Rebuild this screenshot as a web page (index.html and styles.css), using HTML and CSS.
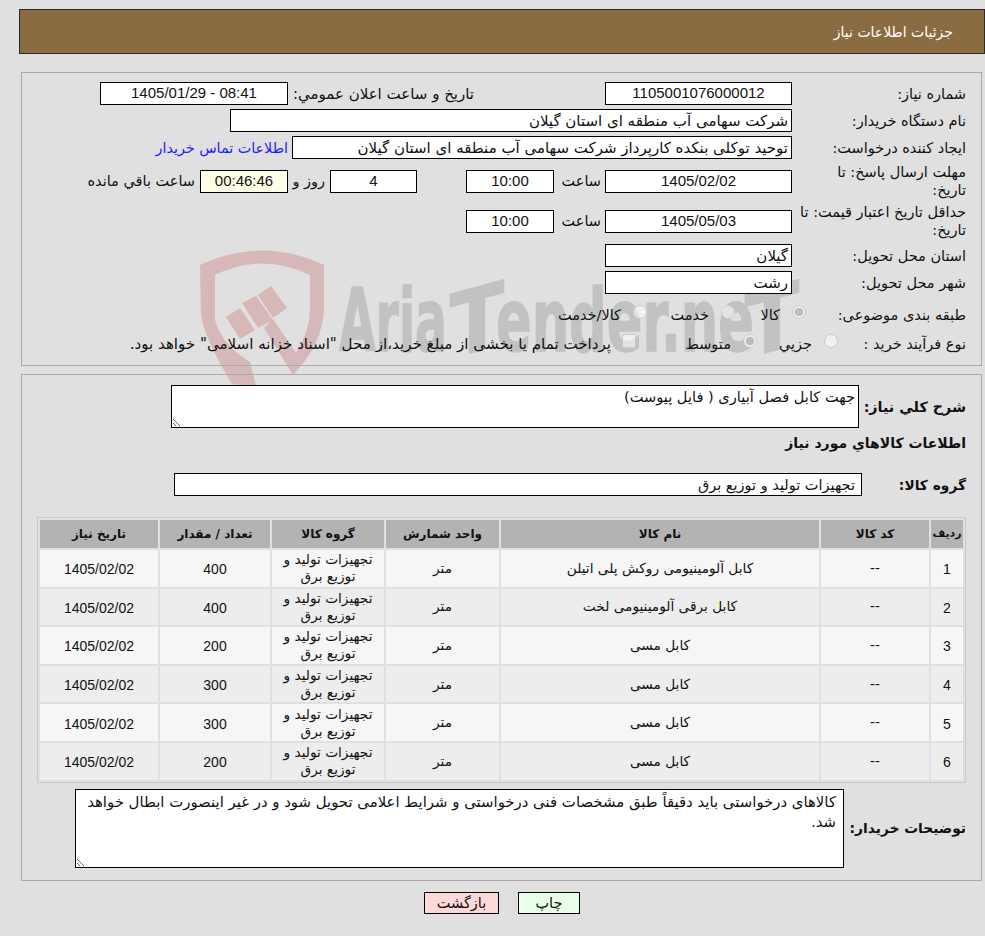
FILE: index.html
```html
<!DOCTYPE html>
<html lang="fa" dir="rtl">
<head>
<meta charset="utf-8">
<title>جزئیات اطلاعات نیاز</title>
<link rel="stylesheet" href="styles.css">
</head>
<body>
<svg class="watermark" width="985" height="420" viewBox="0 0 985 420" aria-hidden="true">
  <path class="wm-red" fill-rule="evenodd" d="M200,265 Q262,236 324,265 L324,310 Q322,345 293,375 L264,328 L273,319 L296,353 Q310,330 310,310 L310,275 Q262,252 215,275 L215,320 Q222,345 250,362 L256,386 L232,384 Q205,340 201,315 Z"/>
  <polygon class="wm-red" points="226,317 240,308 255,330 240,339"/>
  <polygon class="wm-red" points="242,303 256,296 273,320 258,328"/>
  <polygon class="wm-red" points="258,295 271,286 287,308 273,318"/>
  <text class="wm-text" x="339" y="351" textLength="108" lengthAdjust="spacingAndGlyphs">Aria</text>
  <text class="wm-text" x="450" y="351" textLength="54" lengthAdjust="spacingAndGlyphs" transform="translate(0 128) skewY(-15)">T</text>
  <text class="wm-text" x="496" y="351" textLength="258" lengthAdjust="spacingAndGlyphs">ender.ne</text>
  <text class="wm-text" x="745" y="351" textLength="54" lengthAdjust="spacingAndGlyphs" transform="translate(0 207) skewY(-15)">T</text>
</svg>
<div class="page">
  <header class="title-bar">جزئیات اطلاعات نیاز</header>

  <section class="panel panel-top">
    <div class="row">
      <div class="lbl">شماره نیاز:</div>
      <div class="box num w187">1105001076000012</div>
      <div class="lbl-auto ms131 w181">تاریخ و ساعت اعلان عمومي:</div>
      <div class="box num w188 ms5" dir="ltr">1405/01/29 - 08:41</div>
    </div>
    <div class="row">
      <div class="lbl">نام دستگاه خریدار:</div>
      <div class="box text w562">شرکت سهامی آب منطقه ای استان گیلان</div>
    </div>
    <div class="row">
      <div class="lbl">ایجاد کننده درخواست:</div>
      <div class="box text w500">توحید توکلی بنکده کارپرداز شرکت سهامی آب منطقه ای استان گیلان</div>
      <a class="contact" href="#">اطلاعات تماس خریدار</a>
    </div>
    <div class="row tall">
      <div class="lbl">مهلت ارسال پاسخ: تا<br>تاریخ:</div>
      <div class="box num w187">1405/02/02</div>
      <div class="saat">ساعت</div>
      <div class="box num w88">10:00</div>
      <div class="box num w87 ms49">4</div>
      <div class="lbl-auto days">روز و</div>
      <div class="box num w88 timer">00:46:46</div>
      <div class="lbl-auto ms5">ساعت باقي مانده</div>
    </div>
    <div class="row tall">
      <div class="lbl">حداقل تاریخ اعتبار قیمت: تا تاریخ:</div>
      <div class="box num w187">1405/05/03</div>
      <div class="saat">ساعت</div>
      <div class="box num w88">10:00</div>
    </div>
    <div class="row">
      <div class="lbl">استان محل تحویل:</div>
      <div class="box text w187">گیلان</div>
    </div>
    <div class="row">
      <div class="lbl">شهر محل تحویل:</div>
      <div class="box text w187">رشت</div>
    </div>
    <div class="row choice first-choice">
      <div class="lbl-choice w160">طبقه بندی موضوعی:</div>
      <label class="opt w71"><input type="radio" name="c" class="mark" checked disabled><span>کالا</span></label>
      <label class="opt w88b"><input type="radio" name="c" class="mark" disabled><span>خدمت</span></label>
      <label class="opt"><input type="radio" name="c" class="mark" disabled><span>کالا/خدمت</span></label>
    </div>
    <div class="row choice">
      <div class="lbl-choice w128">نوع فرآیند خرید :</div>
      <label class="opt w81"><input type="radio" name="p" class="mark" disabled><span>جزيي</span></label>
      <label class="opt w121"><input type="radio" name="p" class="mark" checked disabled><span>متوسط</span></label>
      <label class="opt long"><input type="checkbox" class="mark square" disabled><span>پرداخت تمام یا بخشی از مبلغ خرید،از محل "اسناد خزانه اسلامی" خواهد بود.</span></label>
    </div>
  </section>

  <section class="panel panel-bottom">
    <div class="summary">
      <div class="lbl-bold w107">شرح کلي نیاز:</div>
      <textarea class="area area-short" readonly>جهت کابل فصل آبیاری ( فایل پیوست)</textarea>
    </div>
    <h2 class="goods-title">اطلاعات کالاهاي مورد نیاز</h2>
    <div class="group">
      <div class="lbl-bold small w104">گروه کالا:</div>
      <div class="box text group-box w688">تجهیزات تولید و توزیع برق</div>
    </div>
    <table class="items">
      <thead>
        <tr>
          <th class="c-row">ردیف</th><th class="c-code">کد کالا</th><th class="c-name">نام کالا</th><th class="c-unit">واحد شمارش</th><th class="c-group">گروه کالا</th><th class="c-qty">تعداد / مقدار</th><th class="c-date">تاریخ نیاز</th>
        </tr>
      </thead>
      <tbody>
        <tr><td class="d">1</td><td>--</td><td>کابل آلومینیومی روکش پلی اتیلن</td><td>متر</td><td>تجهیزات تولید و توزیع برق</td><td class="d">400</td><td class="d">1405/02/02</td></tr>
        <tr><td class="d">2</td><td>--</td><td>کابل برقی آلومینیومی لخت</td><td>متر</td><td>تجهیزات تولید و توزیع برق</td><td class="d">400</td><td class="d">1405/02/02</td></tr>
        <tr><td class="d">3</td><td>--</td><td>کابل مسی</td><td>متر</td><td>تجهیزات تولید و توزیع برق</td><td class="d">200</td><td class="d">1405/02/02</td></tr>
        <tr><td class="d">4</td><td>--</td><td>کابل مسی</td><td>متر</td><td>تجهیزات تولید و توزیع برق</td><td class="d">300</td><td class="d">1405/02/02</td></tr>
        <tr><td class="d">5</td><td>--</td><td>کابل مسی</td><td>متر</td><td>تجهیزات تولید و توزیع برق</td><td class="d">300</td><td class="d">1405/02/02</td></tr>
        <tr><td class="d">6</td><td>--</td><td>کابل مسی</td><td>متر</td><td>تجهیزات تولید و توزیع برق</td><td class="d">200</td><td class="d">1405/02/02</td></tr>
      </tbody>
    </table>
    <div class="notes">
      <div class="lbl-bold small w122">توضیحات خریدار:</div>
      <textarea class="area area-tall" readonly>کالاهای درخواستی باید دقیقاً طبق مشخصات فنی درخواستی و شرایط اعلامی تحویل شود و در غیر اینصورت ابطال خواهد شد.</textarea>
    </div>
  </section>

  <div class="actions">
    <button class="btn print" type="button">چاپ</button>
    <button class="btn back" type="button">بازگشت</button>
  </div>
</div>
</body>
</html>
```
FILE: styles.css
```css
* { box-sizing: border-box; }
html, body { margin: 0; padding: 0; }
body {
  position: relative;
  background: #e0e0e0;
  color: #111;
  font: 14.5px/18px "DejaVu Sans", sans-serif;
  height: 936px;
  overflow: hidden;
}
.watermark { position: absolute; left: 0; top: 0; pointer-events: none; direction: ltr; }
.wm-red { fill: #d6b8b9; }
.wm-text { fill: #c2c2c2; stroke: #c2c2c2; stroke-width: 1.5px; font: bold 88px "DejaVu Sans", sans-serif; }
.page { position: relative; padding-top: 9px; }
.title-bar {
  margin-right: 0;
  margin-left: 19px;
  height: 45px;
  background: #8b6c42;
  border: 1px solid #2a2a2a;
  color: #fff;
  font-size: 14px;
  line-height: 44px;
  padding-right: 31px;
}
.panel {
  margin: 18px 3px 0 0;
  margin-left: 21px;
  border: 1px solid #aaa;
  padding: 9px 15px 0 15px;
}
.panel-top { height: 294px; }
.panel-bottom { margin-top: 8px; height: 507px; padding-top: 10px; }
.row { display: flex; align-items: center; min-height: 23px; margin-bottom: 4px; }
.row.tall { min-height: 36px; }
.row.tall + .row:not(.tall) { margin-top: 5px; }
.lbl { width: 174px; padding-left: 2px; flex: none; }
.lbl-auto { flex: none; white-space: nowrap; }
.w181 { width: 181px; font-size: 15px; }
.box {
  flex: none;
  height: 23px;
  background: #fff;
  border: 1px solid #000;
  line-height: 22px;
}
.num { font: 15px/20px "Liberation Sans", sans-serif; text-align: center; }
.text { padding-right: 3px; padding-left: 3px; white-space: nowrap; overflow: hidden; font-size: 15px; }
.w187 { width: 187px; }
.w188 { width: 188px; }
.w562 { width: 562px; }
.w500 { width: 500px; }
.w88 { width: 88px; }
.w87 { width: 87px; }
.w688 { width: 688px; }
.ms131 { margin-right: 131px; }
.ms49 { margin-right: 49px; }
.ms5 { margin-right: 5px; }
.contact { color: #1a1aff; text-decoration: none; margin-right: 4px; white-space: nowrap; font-size: 14.3px; }
.saat { width: 51px; padding-right: 4px; flex: none; }
.days { margin-right: 5px; width: 37px; }
.timer { background: #ffffe9; }
.choice { margin-bottom: 0; height: 29px; }
.first-choice { margin-top: 6px; }
.lbl-choice { flex: none; white-space: nowrap; }
.w160 { width: 160px; }
.w128 { width: 128px; }
.opt { display: flex; align-items: center; flex: none; white-space: nowrap; }
.long { font-size: 15.1px; }
.w71 { width: 71px; }
.w88b { width: 88px; }
.w81 { width: 81px; }
.w121 { width: 121px; }
.mark {
  appearance: none;
  flex: none;
  width: 14px;
  height: 14px;
  margin: -5px 0 0 12px;
  border: 1px solid #c9c9c9;
  border-radius: 50%;
  background: rgba(255,255,255,0.55);
}
.mark:checked { background: radial-gradient(circle, #bdbdbd 0 4px, #eee 4.5px); }
.square { border-radius: 2px; margin-left: 11px; }
.lbl-bold { flex: none; font-weight: bold; font-size: 14.3px; white-space: nowrap; }
.lbl-bold.small { font-size: 13.8px; }
.w107 { width: 107px; }
.w104 { width: 104px; }
.w122 { width: 122px; }
.summary, .group, .notes { display: flex; align-items: center; }
.area {
  display: block;
  flex: none;
  background: #fff;
  color: #111;
  border: 1px solid #000;
  border-radius: 0;
  font: 14.6px/20px "DejaVu Sans", sans-serif;
  margin: 0;
  outline: none;
}
.area-short { width: 688px; height: 43px; padding: 1px 3px; resize: both; }
.area-tall { width: 769px; height: 79px; padding: 2px 7px; resize: both; font-size: 14.9px; }
.goods-title { margin: 6px 0 0; height: 18px; font-size: 14px; line-height: 18px; font-weight: bold; }
.group { margin-top: 21px; }
.group-box { font-size: 14.5px; padding-right: 6px; }
.items {
  margin: 21px 0 0 0;
  width: 928px;
  border: 1px solid #c8c8c8;
  border-spacing: 2px;
  border-collapse: separate;
  table-layout: fixed;
  font-size: 13.7px;
}
.items th { height: 28px; background: #b3b3b3; font-size: 12px; padding: 0; font-weight: bold; }
.items th.c-row { font-size: 11px; }
.items td { height: 36.6px; padding: 0 6px; text-align: center; line-height: 17px; }
.items tbody tr:nth-child(odd) td { background: #f6f6f6; }
.items tbody tr:nth-child(even) td { background: #ededed; }
.items .d { font: 14px "Liberation Sans", sans-serif; padding: 2px 0 0; }
.c-row { width: 32px; }
.c-code { width: 108px; }
.c-name { width: 318px; }
.c-unit { width: 113px; }
.c-group { width: 112px; }
.c-qty { width: 110px; }
.c-date { width: 118px; }
.notes { margin-top: 6px; }
.actions { display: flex; justify-content: center; gap: 19px; padding-left: 19px; margin-top: 11px; }
.btn {
  height: 22px;
  border: 1px solid #000;
  padding: 0;
  font: 14.5px/18px "DejaVu Sans", sans-serif;
  color: #111;
  border-radius: 0;
}
.print { width: 62px; background: #eaffe8; }
.back { width: 75px; background: #ffd9d9; }
```
